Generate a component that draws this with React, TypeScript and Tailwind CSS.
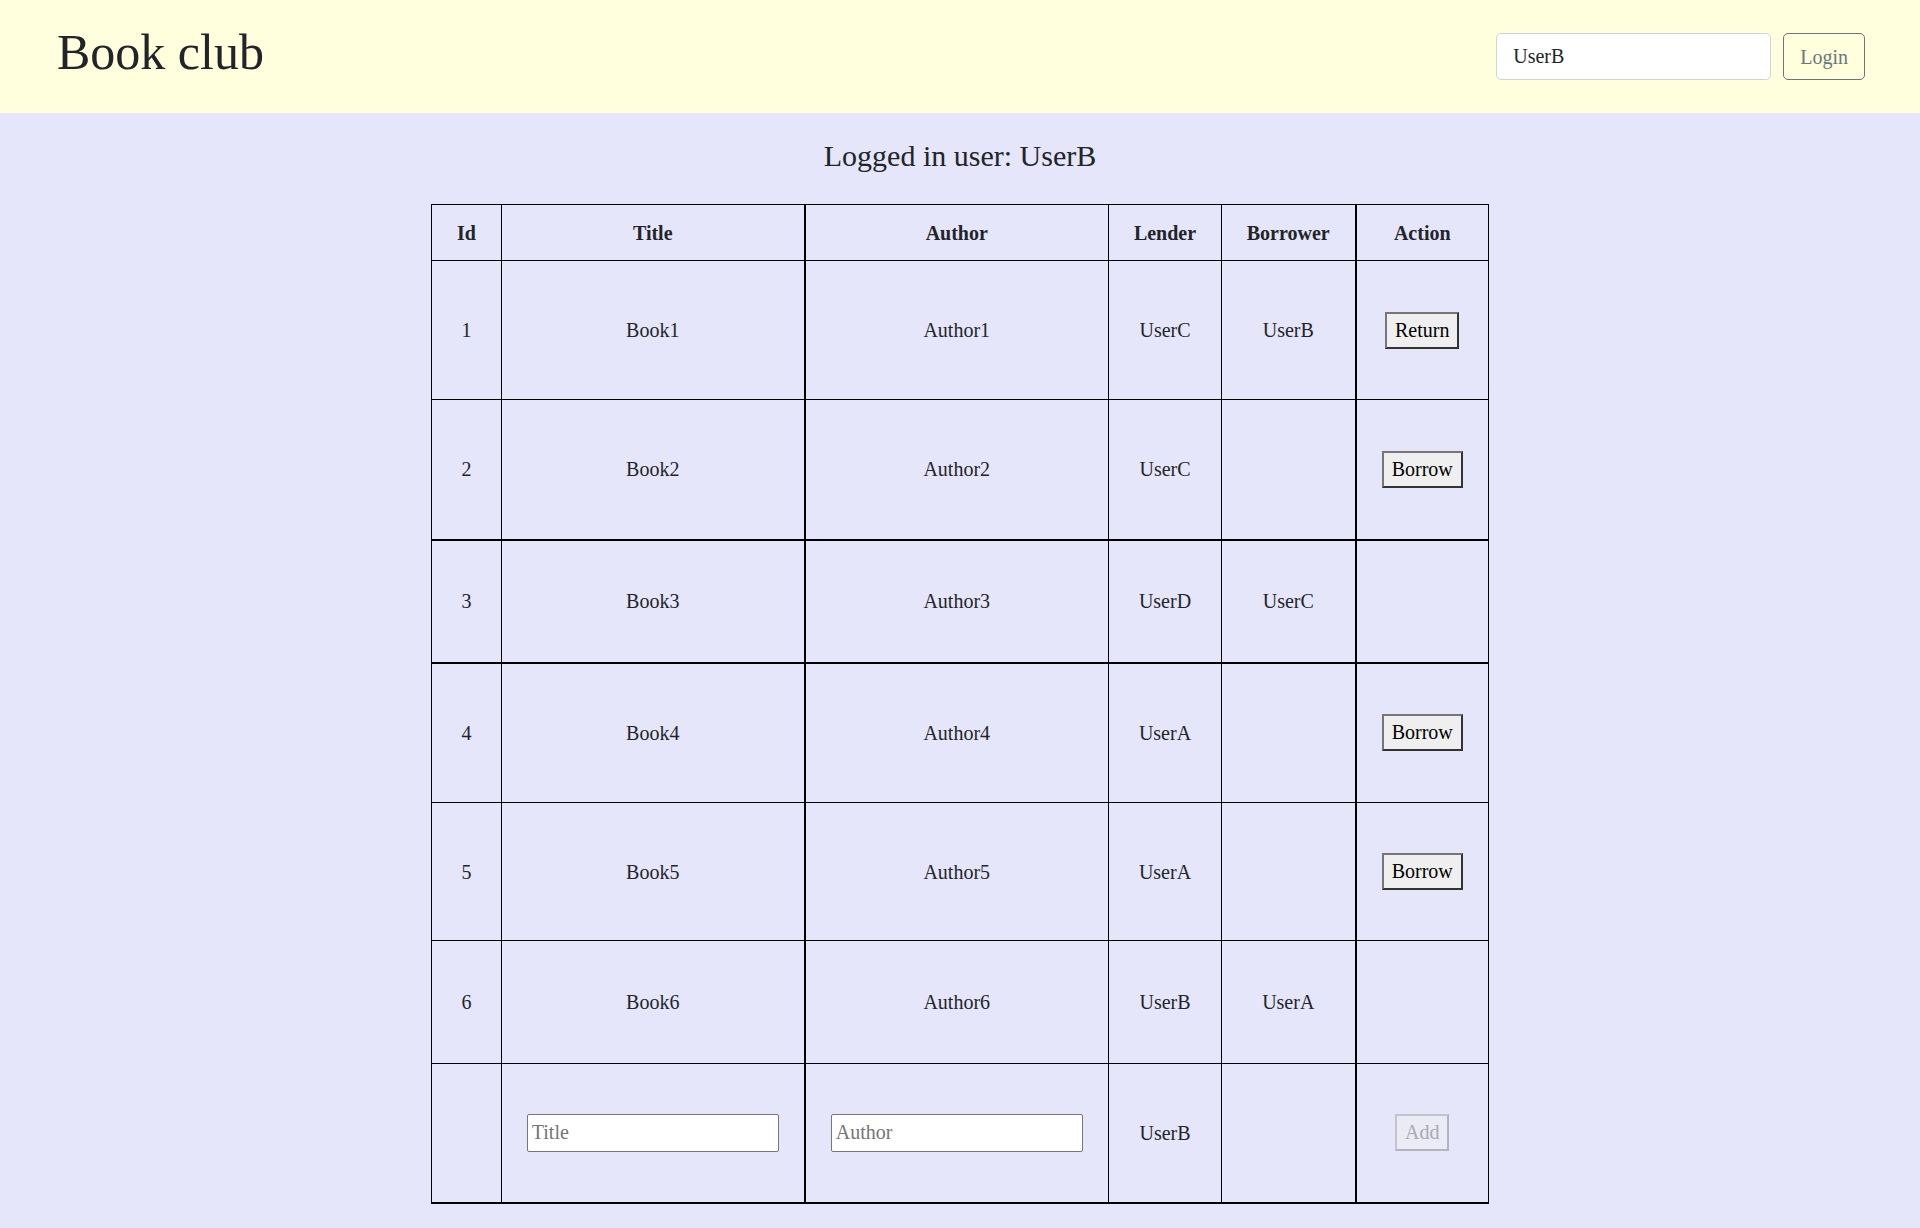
import { useState } from 'react'

type Book = {
  id: number
  title: string
  author: string
  lender: string
  borrower: string
}

const books: Book[] = [
  { id: 1, title: 'Book1', author: 'Author1', lender: 'UserC', borrower: 'UserB' },
  { id: 2, title: 'Book2', author: 'Author2', lender: 'UserC', borrower: '' },
  { id: 3, title: 'Book3', author: 'Author3', lender: 'UserD', borrower: 'UserC' },
  { id: 4, title: 'Book4', author: 'Author4', lender: 'UserA', borrower: '' },
  { id: 5, title: 'Book5', author: 'Author5', lender: 'UserA', borrower: '' },
  { id: 6, title: 'Book6', author: 'Author6', lender: 'UserB', borrower: 'UserA' },
]

// row heights / thick bottom lines, taken from the reference
const rowHeights = ['h-[139px]', 'h-[140px]', 'h-[123px]', 'h-[140px]', 'h-[138px]', 'h-[123px]']
const thickBottom = [false, true, true, false, false, false]

function ActionButton({ label }: { label: string }) {
  return (
    <button className="h-[37px] px-[8px] py-[5px] text-[20px] leading-[23px] text-black bg-[#efefef] border-2 border-t-[#767676] border-l-[#767676] border-b-[#333333] border-r-[#333333]">
      {label}
    </button>
  )
}

export default function App() {
  const [user, setUser] = useState('UserB')
  const [title, setTitle] = useState('')
  const [author, setAuthor] = useState('')

  const cell = 'border border-black text-center align-middle p-0'

  return (
    <div className="min-h-screen bg-[#e6e6fa] text-[#212529] font-['Liberation_Serif',serif]">
      <header className="flex items-center justify-between h-[113px] pl-[57px] pr-[55px] bg-[#ffffdd]">
        <h1 className="text-[50px] leading-[60px] mb-[10px] font-normal">Book club</h1>
        <div className="flex items-center gap-[12px]">
          <input
            value={user}
            onChange={(e) => setUser(e.target.value)}
            className="w-[275px] h-[47px] px-4 text-[20px] bg-white border border-[#ced4da] rounded-[5px] outline-none"
          />
          <button className="h-[47px] px-4 text-[20px] text-[#6c757d] border border-[#6c757d] rounded-[5px]">
            Login
          </button>
        </div>
      </header>

      <h3 className="text-center text-[30px] leading-[36px] mt-[25px] mb-[30px]">
        Logged in user: {user}
      </h3>

      <table className="mx-auto border-collapse table-fixed w-[1057px] text-[20px]">
        <colgroup>
          <col className="w-[70px]" />
          <col className="w-[303px]" />
          <col className="w-[304px]" />
          <col className="w-[113px]" />
          <col className="w-[134px]" />
          <col className="w-[133px]" />
        </colgroup>
        <thead>
          <tr className="h-[56px]">
            <th className={cell}>Id</th>
            <th className={`${cell} border-r-2`}>Title</th>
            <th className={cell}>Author</th>
            <th className={cell}>Lender</th>
            <th className={`${cell} border-r-2`}>Borrower</th>
            <th className={cell}>Action</th>
          </tr>
        </thead>
        <tbody>
          {books.map((b, i) => {
            const rb = thickBottom[i] ? 'border-b-2' : ''
            let action = null
            if (b.borrower === user) action = <ActionButton label="Return" />
            else if (!b.borrower && b.lender !== user) action = <ActionButton label="Borrow" />
            return (
              <tr key={b.id} className={rowHeights[i]}>
                <td className={`${cell} ${rb}`}>{b.id}</td>
                <td className={`${cell} ${rb} border-r-2`}>{b.title}</td>
                <td className={`${cell} ${rb}`}>{b.author}</td>
                <td className={`${cell} ${rb}`}>{b.lender}</td>
                <td className={`${cell} ${rb} border-r-2`}>{b.borrower}</td>
                <td className={`${cell} ${rb}`}>{action}</td>
              </tr>
            )
          })}
          <tr className="h-[139px]">
            <td className={`${cell} border-b-2`}></td>
            <td className={`${cell} border-b-2 border-r-2`}>
              <input
                placeholder="Title"
                value={title}
                onChange={(e) => setTitle(e.target.value)}
                className="w-[252px] h-[38px] px-[4px] text-[20px] bg-white border border-[#767676] rounded-[2px] placeholder:text-[#757575] outline-none"
              />
            </td>
            <td className={`${cell} border-b-2`}>
              <input
                placeholder="Author"
                value={author}
                onChange={(e) => setAuthor(e.target.value)}
                className="w-[252px] h-[38px] px-[4px] text-[20px] bg-white border border-[#767676] rounded-[2px] placeholder:text-[#757575] outline-none"
              />
            </td>
            <td className={`${cell} border-b-2`}>{user}</td>
            <td className={`${cell} border-b-2 border-r-2`}></td>
            <td className={`${cell} border-b-2`}>
              <button
                disabled={!title || !author}
                className="h-[37px] px-[8px] py-[5px] text-[20px] leading-[23px] text-[#a9a9b4] bg-[#ebebf6] border-2 border-t-[#c4c4cc] border-l-[#c4c4cc] border-b-[#b4b4be] border-r-[#b4b4be]"
              >
                Add
              </button>
            </td>
          </tr>
        </tbody>
      </table>
    </div>
  )
}
